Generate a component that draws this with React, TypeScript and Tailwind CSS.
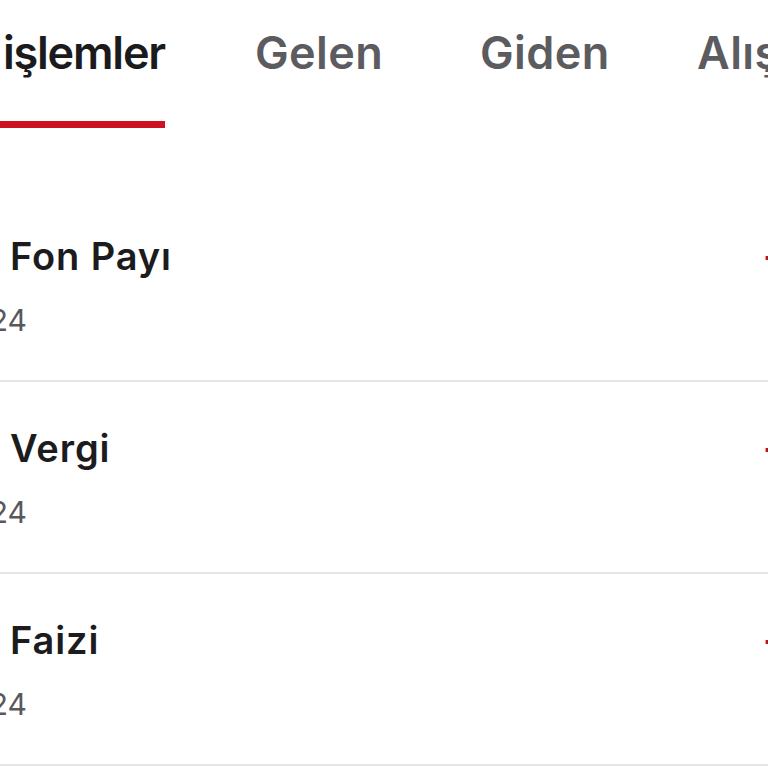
import React from 'react';

const tabs = [
  { label: 'Tüm işlemler', width: 'w-[165px]', active: true },
  { label: 'Gelen', width: 'w-[225px] ml-[90px]', active: false },
  { label: 'Giden', width: 'w-[217px]', active: false },
  { label: 'Alış / Satış', width: 'w-[200px]', active: false },
];

const rows = [
  { prefix: 'Yatırım', title: 'Fon Payı', date: '12.03.2024', amount: '-₺1.250,00' },
  { prefix: 'Stopaj', title: 'Vergi', date: '12.03.2024', amount: '-₺18,75' },
  { prefix: 'Kredi', title: 'Faizi', date: '12.03.2024', amount: '-₺342,10' },
];

export default function App() {
  return (
    <div className="w-[768px] h-[768px] overflow-hidden bg-white font-['Inter','Noto_Sans',sans-serif]">
      <div className="flex h-[128px]">
        {tabs.map((t, i) => (
          <div key={t.label} className={`${t.width} shrink-0 flex flex-col`}>
            <div
              className={`pt-[26px] flex whitespace-nowrap text-[45px] leading-[54px] font-semibold ${
                i === 0
                  ? 'justify-end tracking-[-1.2px] text-[#1b1b1d]'
                  : 'justify-start tracking-[0.4px] text-[#5b5b60]'
              }`}
            >
              <span className="shrink-0">{t.label}</span>
            </div>
            {t.active && <div className="mt-[41px] h-[7px] bg-[#cf1020]" />}
          </div>
        ))}
      </div>

      <div className="mt-[62px]">
        {rows.map((r) => (
          <div key={r.title} className="h-[192px] border-b-2 border-[#e6e6e6] pt-[43px]">
            <div className="flex items-baseline whitespace-nowrap text-[38px] leading-[46px] font-semibold tracking-[0.9px] text-[#1c1c1e]">
              <div className="w-[10px] shrink-0 flex justify-end">
                <span className="shrink-0">{r.prefix}&nbsp;</span>
              </div>
              <span>{r.title}</span>
              <div className="flex-1" />
              <div className="w-[5px] shrink-0">
                <span className="text-[#b3122c]">{r.amount}</span>
              </div>
            </div>
            <div className="mt-[24px] w-[27px] flex justify-end whitespace-nowrap text-[30px] leading-[35px] text-[#58585c]">
              <span className="shrink-0">{r.date}</span>
            </div>
          </div>
        ))}
      </div>
    </div>
  );
}
